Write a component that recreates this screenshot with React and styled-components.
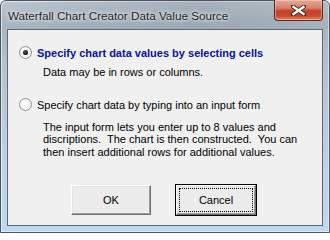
import React, { useState } from 'react';
import styled, { createGlobalStyle } from 'styled-components';

const GlobalStyle = createGlobalStyle`
  html, body { margin: 0; padding: 0; background: #ffffff; }
  body { font-family: "Liberation Sans", Arial, sans-serif; }
`;

export default function App() {
    const [choice, setChoice] = useState('cells');

    return (
        <>
            <GlobalStyle />
            <Window>
                <TitleBar>
                    <Title>Waterfall Chart Creator Data Value Source</Title>
                    <CloseButton aria-label="Close">
                        <svg width="15" height="11" viewBox="0 0 15 11">
                            <path d="M2 1.5 L13 9.5 M13 1.5 L2 9.5" stroke="#3a2a28" strokeWidth="4.2" strokeLinecap="square" />
                            <path d="M2.5 2 L12.5 9 M12.5 2 L2.5 9" stroke="#ffffff" strokeWidth="2.4" strokeLinecap="square" />
                        </svg>
                    </CloseButton>
                </TitleBar>
                <Client>
                    <Option onClick={() => setChoice('cells')}>
                        <Radio $checked={choice === 'cells'} />
                        <OptionLabel $selected={choice === 'cells'}>Specify chart data values by selecting cells</OptionLabel>
                    </Option>
                    <Note>Data may be in rows or columns.</Note>

                    <Option $gap={19} onClick={() => setChoice('form')}>
                        <Radio $checked={choice === 'form'} />
                        <OptionLabel $selected={choice === 'form'}>Specify chart data by typing into an input form</OptionLabel>
                    </Option>
                    <Paragraph>
                        {'The input form lets you enter up to 8 values and'}<br />
                        {'discriptions.  The chart is then constructed.  You can'}<br />
                        {'then insert additional rows for additional values.'}
                    </Paragraph>

                    <Buttons>
                        <Button>OK</Button>
                        <Button $default><Focus>Cancel</Focus></Button>
                    </Buttons>
                </Client>
            </Window>
        </>
    );
}

const Window = styled.div`
    width: 330px;
    height: 233px;
    box-sizing: border-box;
    display: flex;
    flex-direction: column;
    border: 1px solid #4d5560;
    border-radius: 6px 6px 0 0;
    background: linear-gradient(180deg, #bcc6cf 0%, #a9b4bf 10%, #b7c3ce 30%, #bdd3ea 75%, #bfd8f2 100%);
    box-shadow: inset 1px 1px 0 rgba(255,255,255,0.6), inset -1px -1px 0 rgba(255,255,255,0.5);
`;

const TitleBar = styled.div`
    height: 28px;
    display: flex;
    align-items: flex-start;
    justify-content: space-between;
    padding: 0 6px 0 7px;
    background: linear-gradient(90deg, rgba(170,178,186,0.0) 0%, rgba(130,140,150,0.35) 60%, rgba(160,170,180,0.2) 100%);
`;

const Title = styled.div`
    padding-top: 8px;
    font-family: "Liberation Sans", Arial, sans-serif;
    font-size: 11.7px;
    color: #1e1e1e;
    text-shadow: 0 0 6px rgba(255,255,255,0.9), 0 0 3px rgba(255,255,255,0.9);
`;

const CloseButton = styled.div`
    width: 47px;
    height: 20px;
    margin-top: -1px;
    display: flex;
    align-items: center;
    justify-content: center;
    border: 1px solid #5a2a22;
    border-top: none;
    border-radius: 0 0 4px 4px;
    background: linear-gradient(180deg, #e6a99b 0%, #d88068 40%, #c2412a 55%, #c84a30 80%, #e08a6c 100%);
    box-shadow: inset 0 0 0 1px rgba(255,220,210,0.45);
`;

const Client = styled.div`
    flex: 1;
    margin: 0 6px 6px 6px;
    border: 1px solid #5e6873;
    background: #f0f0f0;
    padding: 16px 0 0 11px;
    font-family: "Liberation Sans", Arial, sans-serif;
    font-size: 11px;
    color: #000;
    display: flex;
    flex-direction: column;
    align-items: flex-start;
`;

const Option = styled.div`
    display: flex;
    align-items: center;
    gap: 5px;
    height: 13px;
    margin-top: ${p => p.$gap || 0}px;
    cursor: default;
`;

const Radio = styled.span`
    position: relative;
    width: 11px;
    height: 11px;
    border-radius: 50%;
    border: 1px solid #8e8f8f;
    background: radial-gradient(circle at 40% 40%, #ffffff 0%, #f4f4f4 45%, #d4d4d4 100%);
    box-shadow: inset 0 0 0 1px #f6f6f6;
    &::after {
        content: '';
        display: ${p => (p.$checked ? 'block' : 'none')};
        position: absolute;
        left: 3px;
        top: 3px;
        width: 5px;
        height: 5px;
        border-radius: 50%;
        background: radial-gradient(circle at 40% 35%, #5a5a5a 0%, #0a0a0a 70%);
    }
`;

const OptionLabel = styled.span`
    font-weight: ${p => (p.$selected ? 700 : 400)};
    color: ${p => (p.$selected ? '#0a10a0' : '#000')};
    white-space: nowrap;
`;

const Note = styled.div`
    margin: 7px 0 0 24px;
    line-height: 13px;
    white-space: nowrap;
`;

const Paragraph = styled.div`
    margin: 10px 0 0 24px;
    line-height: 12.3px;
    white-space: pre;
`;

const Buttons = styled.div`
    margin-top: 27px;
    padding-left: 52px;
    display: flex;
    gap: 25px;
`;

const Button = styled.div`
    width: 80px;
    height: 30px;
    box-sizing: border-box;
    display: flex;
    align-items: center;
    justify-content: center;
    background: #ececec;
    border: 1px solid;
    border-color: #ffffff #6d6d6d #6d6d6d #ffffff;
    box-shadow: ${p => (p.$default
        ? '0 0 0 1px #000, inset -1px -1px 0 #a0a0a0, inset 1px 1px 0 #e3e3e3'
        : 'inset -1px -1px 0 #a0a0a0, inset 1px 1px 0 #e3e3e3')};
    font-size: 11px;
    color: #000;
`;

const Focus = styled.span`
    flex: 1;
    align-self: stretch;
    margin: 3px;
    display: flex;
    align-items: center;
    justify-content: center;
    outline: 1px dotted #000;
`;
